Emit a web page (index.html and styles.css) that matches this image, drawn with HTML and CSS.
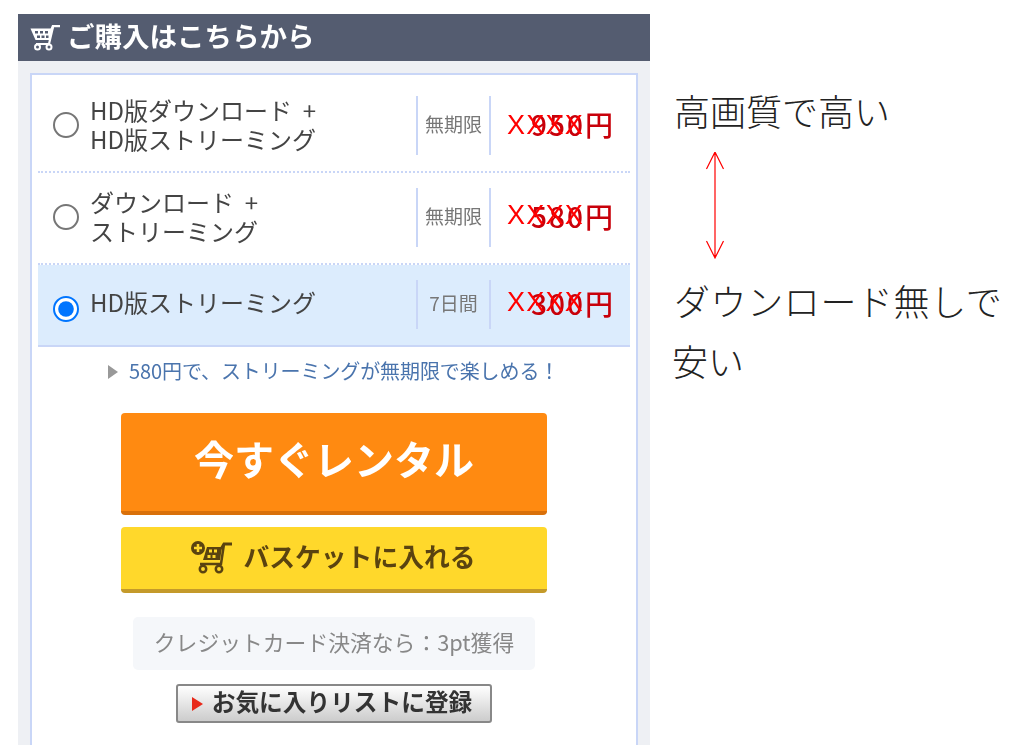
FILE: index.html
```html
<!DOCTYPE html>
<html lang="ja">
<head>
  <meta charset="UTF-8">
  <title>ご購入はこちらから</title>
  <link rel="stylesheet" href="styles.css">
</head>
<body>
  <div class="page">
    <section class="panel">
      <h2 class="panel-title">
        <svg class="cart-icon" viewBox="0 0 32 26">
          <path d="M1.500 3.500H23L21 15H6.500z" fill="#fff"/>
          <path d="M22 6l2-5h7" fill="none" stroke="#fff" stroke-width="2.500"/>
          <path d="M24 2l-4 17H7" fill="none" stroke="#fff" stroke-width="2.200"/>
          <path d="M6 6h3v2.500H6zM11 6h3v2.500h-3zM16 6h3v2.500h-3zM8 10.500h3V13H8zM12.500 10.500h3V13h-3zM17 10.500h2.500V13H17z" fill="#545c70"/>
          <circle cx="8.500" cy="22" r="2.500" fill="none" stroke="#fff" stroke-width="2"/>
          <circle cx="20" cy="22" r="2.500" fill="none" stroke="#fff" stroke-width="2"/>
        </svg>
        ご購入はこちらから
      </h2>
      <div class="box">
        <label class="plan">
          <input type="radio" name="plan" class="plan-radio">
          <span class="plan-name">HD版ダウンロード&nbsp;&nbsp;+<br>HD版ストリーミング</span>
          <span class="plan-term">無期限</span>
          <span class="plan-price"><span class="price-num">950</span>円<span class="price-mask">XXXX</span></span>
        </label>
        <label class="plan">
          <input type="radio" name="plan" class="plan-radio">
          <span class="plan-name">ダウンロード&nbsp;&nbsp;+<br>ストリーミング</span>
          <span class="plan-term">無期限</span>
          <span class="plan-price"><span class="price-num">580</span>円<span class="price-mask">XXXX</span></span>
        </label>
        <label class="plan plan-selected">
          <input type="radio" name="plan" class="plan-radio" checked>
          <span class="plan-name">HD版ストリーミング</span>
          <span class="plan-term">7日間</span>
          <span class="plan-price"><span class="price-num">300</span>円<span class="price-mask">XXXX</span></span>
        </label>

        <p class="upsell">580円で、ストリーミングが無期限で楽しめる！</p>

        <div class="actions">
          <a class="btn btn-rent">今すぐレンタル</a>
          <a class="btn btn-basket">
            <svg class="basket-icon" viewBox="0 0 44 36">
              <circle cx="8" cy="8" r="7" fill="#5a4310"/>
              <path d="M4 8h8M8 4v8" stroke="#ffd82b" stroke-width="2.500"/>
              <path d="M17 7h15l-2 13H13z" fill="#5a4310"/>
              <path d="M19 9.500h3v3h-3zM24 9.500h3v3h-3zM17.500 15h3v3h-3zM22.500 15h3v3h-3z" fill="#ffd82b"/>
              <path d="M31 9l3-5h8" fill="none" stroke="#5a4310" stroke-width="2.800"/>
              <path d="M34 4l-3 20H10" fill="none" stroke="#5a4310" stroke-width="2.500"/>
              <circle cx="13" cy="29" r="3.200" fill="none" stroke="#5a4310" stroke-width="2.500"/>
              <circle cx="29" cy="29" r="3.200" fill="none" stroke="#5a4310" stroke-width="2.500"/>
            </svg>
            バスケットに入れる
          </a>
          <p class="points">クレジットカード決済なら：3pt獲得</p>
          <a class="btn-fav">お気に入りリストに登録</a>
        </div>
      </div>
    </section>

    <aside class="note">
      <p>高画質で高い</p>
      <svg class="note-arrow" viewBox="0 0 20 108">
        <path d="M10 0V106M1.500 17L10 0l8.500 17M1.500 89L10 106l8.500-17" fill="none" stroke="#ff0000" stroke-width="1.200"/>
      </svg>
      <p class="note-wide">ダウンロード無しで</p>
      <p class="note-last">安い</p>
    </aside>
  </div>
</body>
</html>
```

FILE: styles.css
```css
*, *::before, *::after {box-sizing: border-box; margin: 0}
body {
  height: 745px;
  overflow: hidden;
  background: #fff;
  font-family: "Noto Sans CJK JP", "Noto Sans", sans-serif;
}
a { text-decoration: none }

.page {
  display: flex;
  align-items: flex-start;
  padding: 14px 0 0 18px;
}

/* left panel */
.panel {
  flex: none;
  width: 632px;
  height: 731px;
  background: #eef0f4;
  display: flex;
  flex-direction: column;
  filter: blur(0.4px);
}
.panel-title {
  flex: none;
  height: 47px;
  display: flex;
  align-items: center;
  gap: 6px;
  padding: 0 0 4px 11px;
  background: #545c70;
  color: #fff;
  font-size: 27.500px;
  font-weight: 700;
  line-height: 1;
}
.cart-icon { width: 32px; height: 26px; margin-top: 4px; }

.box {
  flex: 1;
  margin: 12px 12px 0;
  padding: 6px 6px 0;
  background: #fff;
  border: 2px solid #c9d6f7;
  border-bottom: 0;
}

/* plan rows */
.plan {
  display: flex;
  align-items: center;
  height: 92px;
  padding: 15px 17px 16px 15px;
  border-bottom: 2px dotted #c9d6f7;
  color: #444;
}
.plan-selected {
  height: 82px;
  background: #dcecfd;
  border-bottom: 2px solid #c9d6f7;
}
.plan-radio {
  flex: none;
  zoom: 2;
  width: 13px;
  height: 13px;
  margin: -1px 5.500px 0 0;
}
.plan-selected .plan-radio { margin-top: 4px; }
.plan-name {
  flex: 1;
  margin-top: -3px;
  font-size: 24px;
  line-height: 29px;
}
.plan-selected .plan-name { margin-top: -7px; }
.plan-term {
  flex: none;
  align-self: stretch;
  width: 75px;
  display: flex;
  align-items: center;
  justify-content: center;
  padding-bottom: 4px;
  border-left: 2px solid #c9d6f7;
  border-right: 2px solid #c9d6f7;
  color: #777;
  font-size: 19px;
}
.plan-price {
  flex: none;
  position: relative;
  width: 122px;
  margin-top: -4px;
  text-align: right;
  color: #c8000a;
  font-size: 28px;
  font-weight: 500;
  line-height: 1;
}
.price-num { letter-spacing: 2px; }
.price-mask {
  position: absolute;
  left: 16px;
  top: 0;
  color: #ff0000;
  font-family: "Liberation Sans", sans-serif;
  font-size: 27px;
  font-weight: 400;
  letter-spacing: 1.200px;
}
.plan:first-child .price-mask { top: 2px; }

.upsell {
  margin-top: 9px;
  padding-left: 91px;
  color: #4a74ad;
  font-size: 20px;
  line-height: 30px;
  letter-spacing: -0.100px;
  position: relative;
}
.upsell::before {
  content: "";
  position: absolute;
  left: 70px;
  top: 9px;
  border-left: 10px solid #999;
  border-top: 7px solid transparent;
  border-bottom: 7px solid transparent;
}

/* buttons */
.actions {
  display: flex;
  flex-direction: column;
  align-items: center;
  margin-top: 27px;
}
.btn {
  width: 426px;
  display: flex;
  align-items: center;
  justify-content: center;
  border-radius: 4px;
  font-weight: 700;
}
.btn-rent {
  height: 102px;
  padding-bottom: 9px;
  background: #ff8a11;
  border-bottom: 4px solid #d9700a;
  color: #fff;
  font-size: 40px;
}
.btn-basket {
  height: 66px;
  margin-top: 12px;
  padding: 0 2px 6px 0;
  gap: 9px;
  background: #ffd82b;
  border-bottom: 4px solid #c49a2a;
  color: #5a4310;
  font-size: 25.800px;
}
.basket-icon { width: 44px; height: 36px; margin-top: 6px; }
.points {
  width: 402px;
  height: 53px;
  margin-top: 24px;
  padding-bottom: 5px;
  display: flex;
  align-items: center;
  justify-content: center;
  background: #f5f7fa;
  border-radius: 5px;
  color: #888;
  font-size: 21.800px;
}
.btn-fav {
  width: 316px;
  height: 39px;
  margin-top: 14px;
  padding: 0 4px 5px 0;
  display: flex;
  align-items: center;
  justify-content: center;
  gap: 9px;
  border: 2px solid #888;
  border-radius: 3px;
  background: linear-gradient(#fff, #ccc);
  color: #333;
  font-size: 23.700px;
  font-weight: 700;
}
.btn-fav::before {
  content: "";
  margin-top: 5px;
  border-left: 11px solid #e8291a;
  border-top: 7px solid transparent;
  border-bottom: 7px solid transparent;
}

/* note on the right */
.note {
  flex: none;
  margin-left: 24px;
  padding-top: 65px;
  color: #222;
  font-size: 36px;
  font-weight: 300;
  line-height: 63px;
  white-space: nowrap;
}
.note-arrow {
  display: block;
  width: 20px;
  height: 108px;
  margin: 10px 0 9px 31px;
}
.note-wide { letter-spacing: 0.600px; }
.note-last { margin: -3px 0 0 -2px; }
```
